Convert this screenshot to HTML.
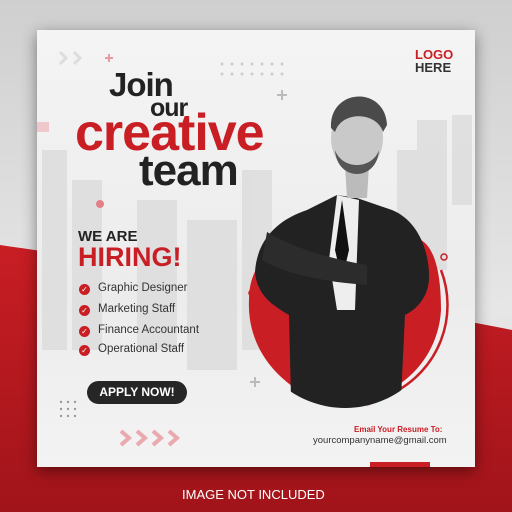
<!DOCTYPE html>
<html><head><style>
*{margin:0;padding:0}
body{width:512px;height:512px;overflow:hidden;position:relative;font-family:"Liberation Sans",sans-serif;background:linear-gradient(180deg,#cfcfcf,#e6e6e6 60%,#d8d8d8)}
.abs{position:absolute}
.card{left:37px;top:30px;width:438px;height:437px;background:linear-gradient(180deg,#f4f4f4,#ececec 60%,#f3f3f3);box-shadow:0 4px 14px rgba(0,0,0,.45);overflow:hidden}
.t{position:absolute;font-weight:bold;white-space:nowrap;line-height:1}
</style></head><body>
<svg class="abs" style="left:0;top:0" width="512" height="512">
<defs><linearGradient id="rg" x1="0" y1="0" x2="0" y2="1"><stop offset="0" stop-color="#c81e24"/><stop offset="1" stop-color="#a0141a"/></linearGradient></defs>
<path d="M0 245 C120 262 360 300 512 330 L512 512 L0 512Z" fill="url(#rg)"/>
</svg>
<div class="abs card">
<svg class="abs" style="left:0;top:0" width="438" height="437">
<defs><clipPath id="pc"><rect x="0" y="0" width="438" height="275"/><circle cx="308" cy="280" r="98"/></clipPath></defs>
<g fill="#dcdcdc" opacity=".8">
<rect x="5" y="120" width="25" height="200"/><rect x="35" y="150" width="30" height="170"/><rect x="100" y="170" width="40" height="150"/><rect x="150" y="190" width="50" height="150"/><rect x="205" y="140" width="30" height="180"/><rect x="380" y="90" width="30" height="150"/><rect x="360" y="120" width="20" height="120"/><rect x="415" y="85" width="20" height="90"/>
</g>
<g fill="#ccc">
<circle cx="185" cy="34" r="1.5"/><circle cx="195" cy="34" r="1.5"/><circle cx="205" cy="34" r="1.5"/><circle cx="215" cy="34" r="1.5"/><circle cx="225" cy="34" r="1.5"/><circle cx="235" cy="34" r="1.5"/><circle cx="245" cy="34" r="1.5"/>
<circle cx="185" cy="44" r="1.5"/><circle cx="195" cy="44" r="1.5"/><circle cx="205" cy="44" r="1.5"/><circle cx="215" cy="44" r="1.5"/><circle cx="225" cy="44" r="1.5"/><circle cx="235" cy="44" r="1.5"/><circle cx="245" cy="44" r="1.5"/>
</g>
<path d="M23 22l6 6-6 6M37 22l6 6-6 6" stroke="#ddd" stroke-width="3" fill="none"/>
<path d="M68 28h8M72 24v8" stroke="#e89aa0" stroke-width="2"/>
<path d="M240 65h10M245 60v10" stroke="#bbb" stroke-width="2"/>
<path d="M213 352h10M218 347v10" stroke="#bbb" stroke-width="2"/>
<circle cx="63" cy="174" r="4" fill="#e28088"/>
<rect x="0" y="92" width="12" height="10" fill="#f0c8cc"/>
<g fill="#999"><circle cx="24" cy="372" r="1.2"/><circle cx="31" cy="372" r="1.2"/><circle cx="38" cy="372" r="1.2"/><circle cx="24" cy="379" r="1.2"/><circle cx="31" cy="379" r="1.2"/><circle cx="38" cy="379" r="1.2"/><circle cx="24" cy="386" r="1.2"/><circle cx="31" cy="386" r="1.2"/><circle cx="38" cy="386" r="1.2"/></g>
<path d="M84 401l8 7-8 7M100 401l8 7-8 7M116 401l8 7-8 7M132 401l8 7-8 7" stroke="#e9a9ae" stroke-width="4" fill="none"/>
<path d="M252 198A98 98 0 1 0 404 240" stroke="#c81e24" stroke-width="2.5" fill="none"/>
<path d="M212 270 A96 96 0 0 0 404 280 C404 215 385 200 360 210 C330 225 300 235 275 225 C240 210 212 230 212 270Z" fill="#c81e24"/>
<circle cx="215" cy="263" r="3" fill="none" stroke="#c81e24" stroke-width="1.5"/>
<circle cx="407" cy="227" r="3" fill="none" stroke="#c81e24" stroke-width="1.5"/>
<path d="M330 365l10 6-10 6z" fill="#f0c0c4"/>
<g clip-path="url(#pc)"><g transform="translate(0,-20)">
<path d="M218 262 C220 230 240 210 270 200 L300 185 L320 188 L355 200 C380 210 393 240 392 270 C390 290 378 300 368 305 L362 430 L255 430 L252 305 C235 295 220 285 218 262Z" fill="#222"/>
<path d="M300 185 L292 250 L300 300 L318 300 L322 190Z" fill="#eee"/>
<path d="M305 190 L298 240 L305 270 L312 240 Z" fill="#111"/>
<path d="M230 222 C260 240 300 250 330 255 L330 275 C290 272 250 265 225 250Z" fill="#2c2c2c"/>
<path d="M308 155 L310 188 L330 188 L332 155Z" fill="#bbb"/>
<ellipse cx="320" cy="128" rx="26" ry="34" fill="#c9c9c9"/>
<path d="M294 118 C292 78 348 75 350 115 L346 122 C340 102 305 100 298 122Z" fill="#4a4a4a"/>
<path d="M298 140 C300 172 340 172 342 140 C335 160 305 160 298 140Z" fill="#555"/>
</g></g>
<rect x="333" y="432" width="60" height="8" fill="#c81e24"/>
</svg>
<div class="t" style="left:72px;top:38px;font-size:33px;color:#222;letter-spacing:-1px">Join</div>
<div class="t" style="left:113px;top:66px;font-size:25px;color:#222;letter-spacing:-1px">our</div>
<div class="t" style="left:38px;top:77px;font-size:52px;color:#c81e24;letter-spacing:-1px">creative</div>
<div class="t" style="left:102px;top:119px;font-size:44px;color:#222;letter-spacing:-1px">team</div>
<div class="t" style="left:378px;top:18px;font-size:13px;color:#c81e24;line-height:13px">LOGO<br><span style="color:#333">HERE</span></div>
<div class="t" style="left:41px;top:199px;font-size:15px;color:#222">WE ARE</div>
<div class="t" style="left:41px;top:214px;font-size:27px;color:#c81e24">HIRING!</div>
<div class="abs" style="left:42px;top:248px;font-size:11.5px;color:#333;line-height:21px">
<div><span style="display:inline-block;width:11px;height:11px;border-radius:50%;background:#c81e24;color:#fff;font-size:8px;line-height:11px;text-align:center;margin-right:8px;vertical-align:-1px">✓</span>Graphic Designer</div>
<div><span style="display:inline-block;width:11px;height:11px;border-radius:50%;background:#c81e24;color:#fff;font-size:8px;line-height:11px;text-align:center;margin-right:8px;vertical-align:-1px">✓</span>Marketing Staff</div>
<div><span style="display:inline-block;width:11px;height:11px;border-radius:50%;background:#c81e24;color:#fff;font-size:8px;line-height:11px;text-align:center;margin-right:8px;vertical-align:-1px">✓</span>Finance Accountant</div>
<div style="margin-top:-2px"><span style="display:inline-block;width:11px;height:11px;border-radius:50%;background:#c81e24;color:#fff;font-size:8px;line-height:11px;text-align:center;margin-right:8px;vertical-align:-1px">✓</span>Operational Staff</div>
</div>
<div class="t" style="left:50px;top:351px;width:100px;height:23px;border-radius:12px;background:#262626;color:#fff;font-size:12px;line-height:23px;text-align:center">APPLY NOW!</div>
<div class="t" style="left:317px;top:396px;font-size:8px;color:#c81e24">Email Your Resume To:</div>
<div class="abs" style="left:276px;top:405px;font-size:9.5px;color:#333;white-space:nowrap">yourcompanyname@gmail.com</div>
</div>
<div class="abs" style="left:182px;top:487px;font-size:13px;color:#fff;white-space:nowrap">IMAGE NOT INCLUDED</div>
</body></html>
